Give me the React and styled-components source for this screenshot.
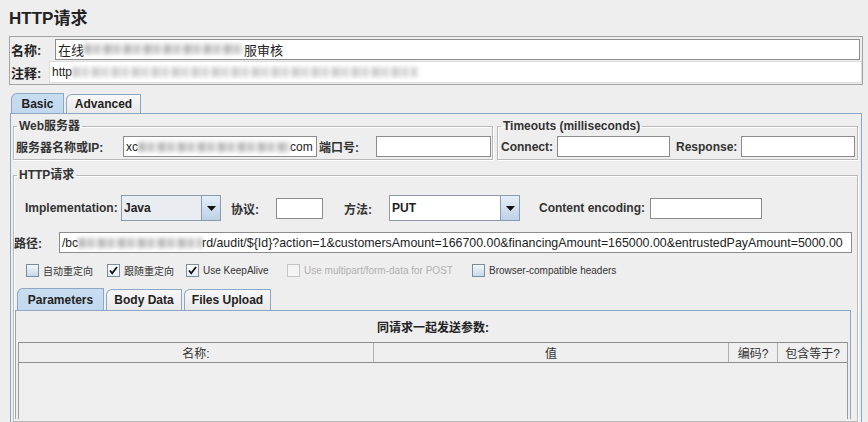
import styled, { createGlobalStyle } from "styled-components";

const GlobalStyle = createGlobalStyle`
  html, body {
    margin: 0;
    padding: 0;
    background: #eeeeee;
  }
  body {
    font-family: "Liberation Sans", "Noto Sans CJK SC", sans-serif;
    font-size: 12px;
    color: #333;
    overflow: hidden;
  }
`;

const Page = styled.div`
  width: 868px;
  height: 422px;
  box-sizing: border-box;
  padding: 6px 5px 0 9px;
  display: flex;
  flex-direction: column;
  overflow: hidden;
`;

const Title = styled.h1`
  margin: 0;
  height: 30px;
  line-height: 26px;
  font-size: 17px;
  font-weight: bold;
  color: #222;
`;

const NameBox = styled.div`
  border: 1px solid #a3a3a3;
  padding: 1px 0 0;
  display: flex;
  flex-direction: column;
`;

const NameRow = styled.div`
  display: flex;
  align-items: center;
  height: ${(p) => p.$h}px;
`;

const NameLabel = styled.label`
  width: ${(p) => p.$w}px;
  padding-left: 1px;
  box-sizing: border-box;
  font-weight: bold;
  font-size: 13px;
  color: #222;
`;

const Field = styled.div`
  box-sizing: border-box;
  height: ${(p) => p.$h || 21}px;
  width: ${(p) => (p.$w ? `${p.$w}px` : "auto")};
  flex: ${(p) => (p.$w ? "none" : 1)};
  background: #fff;
  border: 1px solid ${(p) => (p.$soft ? "#dcdcdc" : "#8c8c8c")};
  display: flex;
  align-items: center;
  padding-left: 2px;
  white-space: nowrap;
  overflow: hidden;
  font-size: ${(p) => p.$fs || 12}px;
  color: #222;
  margin-right: ${(p) => p.$mr || 0}px;
`;

const Smudge = styled.span`
  display: inline-block;
  width: ${(p) => p.$w}px;
  height: 10px;
  flex: none;
  background: repeating-linear-gradient(
    90deg,
    #a6a6a6 0 7px,
    #d6d6d6 7px 10px,
    #b8b8b8 10px 16px,
    #e4e4e4 16px 20px
  );
  filter: blur(2px);
  opacity: ${(p) => p.$o || 0.75};
`;

const TabRow = styled.div`
  display: flex;
  align-items: flex-end;
  margin-top: 8px;
  padding-left: ${(p) => p.$pl || 2}px;
  height: ${(p) => p.$h || 20}px;
  gap: 2px;
`;

const Tab = styled.div`
  box-sizing: border-box;
  width: ${(p) => p.$w}px;
  height: ${(p) => (p.$active ? p.$h : p.$h - 1)}px;
  border: 1px solid #8da6c1;
  border-bottom: none;
  border-top-left-radius: 6px;
  background: ${(p) =>
    p.$active
      ? "linear-gradient(#c9ddf1, #c2d8ee)"
      : "linear-gradient(#f7f7f7, #e9e9e9)"};
  font-weight: bold;
  font-size: 12px;
  color: #222;
  display: flex;
  align-items: center;
  justify-content: center;
`;

const Panel = styled.div`
  flex: 1;
  margin: 0 1px 0 1px;
  border: 1px solid #8da6c1;
  border-bottom: none;
  padding: 5px 3px 0 2px;
  display: flex;
  flex-direction: column;
`;

const TopRow = styled.div`
  display: flex;
  gap: 4px;
`;

const Group = styled.fieldset`
  margin: ${(p) => p.$mt || 0}px 0 0;
  min-width: 0;
  padding: 3px 2px 2px 1px;
  border: 1px solid #b9b9b9;
  box-shadow: inset 1px 1px 0 #fff, 1px 1px 0 #fff;
  width: ${(p) => (p.$w ? `${p.$w}px` : "auto")};
  box-sizing: border-box;
  flex: ${(p) => (p.$w ? "none" : 1)};
  display: flex;
  flex-direction: column;
`;

const GroupTitle = styled.legend`
  font-weight: bold;
  font-size: 12px;
  line-height: 14px;
  color: #333;
  padding: 0 2px;
  margin-left: 2px;
`;

const Row = styled.div`
  display: flex;
  align-items: center;
  margin-top: ${(p) => p.$mt || 0}px;
  padding-left: ${(p) => p.$pl || 0}px;
  height: ${(p) => p.$h || 21}px;
`;

const Label = styled.span`
  flex: none;
  width: ${(p) => p.$w}px;
  margin-left: ${(p) => p.$ml || 0}px;
  font-weight: bold;
  font-size: 12px;
  color: #333;
  white-space: nowrap;
`;

const Combo = styled.div`
  box-sizing: border-box;
  width: ${(p) => p.$w}px;
  height: 26px;
  flex: none;
  display: flex;
  border: 1px solid #8a9bb0;
  background: ${(p) => (p.$editable ? "#fff" : "#e9ecf0")};
`;

const ComboText = styled.div`
  flex: 1;
  display: flex;
  align-items: center;
  padding-left: 2px;
  font-weight: bold;
  font-size: 12px;
  color: #222;
`;

const ComboButton = styled.div`
  width: 18px;
  border-left: 1px solid #8a9bb0;
  background: linear-gradient(#e6eef6, #bdd1e6);
  display: flex;
  align-items: center;
  justify-content: center;
`;

const PathText = styled.span`
  font-size: 12.4px;
`;

const Checks = styled.div`
  display: flex;
  align-items: center;
  margin-top: 10px;
  padding-left: 11px;
  height: 14px;
`;

const CheckItem = styled.label`
  display: flex;
  align-items: center;
  width: ${(p) => p.$w}px;
  flex: none;
  gap: 4px;
  font-size: 10px;
  color: ${(p) => (p.$disabled ? "#b0b0b0" : "#333")};
  white-space: nowrap;
`;

const Box = styled.span`
  box-sizing: border-box;
  width: 13px;
  height: 13px;
  flex: none;
  border: 1px solid ${(p) => (p.$disabled ? "#c4c4c4" : "#7e8b99")};
  background: ${(p) =>
    p.$disabled
      ? "#f4f4f4"
      : p.$checked
      ? "linear-gradient(#fff, #e6eef6)"
      : "linear-gradient(#f2f6fa, #c7d9ec)"};
  display: flex;
  align-items: center;
  justify-content: center;
`;

const InnerTabs = styled(TabRow)`
  margin-top: 11px;
`;

const InnerPanel = styled.div`
  flex: 1;
  margin-right: 4px;
  border: 1px solid #8da6c1;
  border-bottom: none;
  display: flex;
  flex-direction: column;
  padding: 0 2px;
`;

const ParamTitle = styled.div`
  height: 31px;
  display: flex;
  align-items: center;
  justify-content: center;
  font-weight: bold;
  font-size: 12px;
  color: #222;
`;

const Table = styled.div`
  flex: 1;
  border-left: 1px solid #9a9a9a;
  border-right: 1px solid #9a9a9a;
  background: #efefef;
`;

const HeaderRow = styled.div`
  display: flex;
  height: 21px;
  border-top: 1px solid #8c8c8c;
  border-bottom: 1px solid #8c8c8c;
  box-sizing: border-box;
`;

const HeaderCell = styled.div`
  width: ${(p) => (p.$w ? `${p.$w}px` : "auto")};
  flex: ${(p) => (p.$w ? "none" : 1)};
  border-right: ${(p) => (p.$last ? "none" : "1px solid #b0b0b0")};
  display: flex;
  align-items: center;
  justify-content: center;
  font-size: 12px;
  color: #333;
`;

const Arrow = () => (
  <svg width="9" height="5" viewBox="0 0 9 5">
    <path d="M0 0h9L4.5 5z" fill="#111" />
  </svg>
);

const Tick = () => (
  <svg width="9" height="9" viewBox="0 0 9 9">
    <path d="M1 4.5l2.2 2.8L8 1" fill="none" stroke="#111" strokeWidth="1.8" />
  </svg>
);

const Check = ({ w, checked, disabled, children }) => (
  <CheckItem $w={w} $disabled={disabled}>
    <Box $checked={checked} $disabled={disabled}>
      {checked && <Tick />}
    </Box>
    {children}
  </CheckItem>
);

export default function App() {
  return (
    <Page>
      <GlobalStyle />
      <Title>HTTP请求</Title>

      <NameBox>
        <NameRow $h={22}>
          <NameLabel $w={45}>名称:</NameLabel>
          <Field $mr={2} $fs={13}>
            在线<Smudge $w={160} />服审核
          </Field>
        </NameRow>
        <NameRow $h={24}>
          <NameLabel $w={39}>注释:</NameLabel>
          <Field $h={22} $soft>
            http<Smudge $w={345} $o={0.55} />
          </Field>
        </NameRow>
      </NameBox>

      <TabRow>
        <Tab $w={53} $h={20} $active>Basic</Tab>
        <Tab $w={75} $h={20}>Advanced</Tab>
      </TabRow>

      <Panel>
        <TopRow>
          <Group $w={480}>
            <GroupTitle>Web服务器</GroupTitle>
            <Row>
              <Label $w={107} $ml={1}>服务器名称或IP:</Label>
              <Field $w={194}>
                xc<Smudge $w={152} />com
              </Field>
              <Label $w={57} $ml={2}>端口号:</Label>
              <Field $w={115} />
            </Row>
          </Group>
          <Group>
            <GroupTitle>Timeouts (milliseconds)</GroupTitle>
            <Row>
              <Label $w={56} $ml={2}>Connect:</Label>
              <Field $w={113} />
              <Label $w={65} $ml={6}>Response:</Label>
              <Field $w={114} />
            </Row>
          </Group>
        </TopRow>

        <Group $mt={8}>
          <GroupTitle>HTTP请求</GroupTitle>
          <Row $mt={10} $h={26} $pl={9}>
            <Label $w={96} $ml={1}>Implementation:</Label>
            <Combo $w={100}>
              <ComboText>Java</ComboText>
              <ComboButton>
                <Arrow />
              </ComboButton>
            </Combo>
            <Label $w={45} $ml={10}>协议:</Label>
            <Field $w={47} />
            <Label $w={45} $ml={21}>方法:</Label>
            <Combo $w={131} $editable>
              <ComboText>PUT</ComboText>
              <ComboButton>
                <Arrow />
              </ComboButton>
            </Combo>
            <Label $w={111} $ml={19}>Content encoding:</Label>
            <Field $w={112} />
          </Row>

          <Row $mt={11}>
            <Label $w={45} $ml={-1}>路径:</Label>
            <Field $mr={3}>
              /bc<Smudge $w={124} />
              <PathText>
                rd/audit/${"{"}Id{"}"}?action=1&amp;customersAmount=166700.00&amp;financingAmount=165000.00&amp;entrustedPayAmount=5000.00
              </PathText>
            </Field>
          </Row>

          <Checks>
            <Check w={81}>自动重定向</Check>
            <Check w={79} checked>跟随重定向</Check>
            <Check w={101} checked>Use KeepAlive</Check>
            <Check w={185} disabled>Use multipart/form-data for POST</Check>
            <Check w={200}>Browser-compatible headers</Check>
          </Checks>

          <InnerTabs $pl={2} $h={22}>
            <Tab $w={87} $h={22} $active>Parameters</Tab>
            <Tab $w={76} $h={22}>Body Data</Tab>
            <Tab $w={87} $h={22}>Files Upload</Tab>
          </InnerTabs>

          <InnerPanel>
            <ParamTitle>同请求一起发送参数:</ParamTitle>
            <Table>
              <HeaderRow>
                <HeaderCell $w={354}>名称:</HeaderCell>
                <HeaderCell $w={354}>值</HeaderCell>
                <HeaderCell $w={48}>编码?</HeaderCell>
                <HeaderCell $last>包含等于?</HeaderCell>
              </HeaderRow>
            </Table>
          </InnerPanel>
        </Group>
      </Panel>
    </Page>
  );
}
